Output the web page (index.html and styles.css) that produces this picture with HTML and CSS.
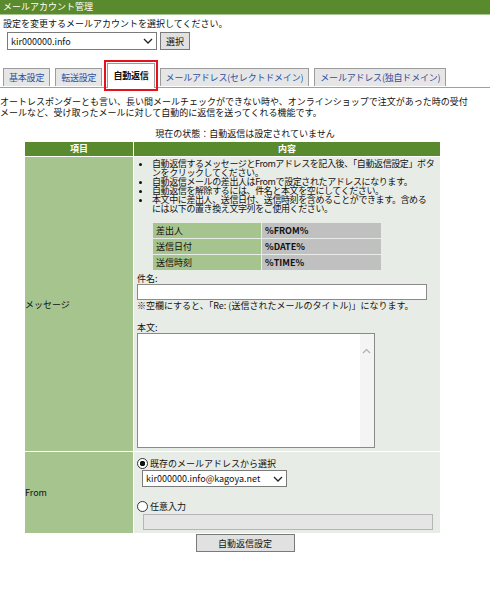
FILE: index.html
```html
<!DOCTYPE html>
<html>
<head>
    <meta charset="utf-8">
    <title>メールアカウント管理</title>
    <link rel="stylesheet" href="styles.css">
</head>
<body>

<div class="title-bar">メールアカウント管理</div>

<p class="lead">設定を変更するメールアカウントを選択してください。</p>
<div class="account-row">
    <span class="select-wrap account-select">
        <select>
            <option>kir000000.info</option>
        </select>
        <svg class="chevron" width="10" height="6" viewBox="0 0 10 6"><path d="M1 1 L5 5 L9 1" fill="none" stroke="#222" stroke-width="1.3"/></svg>
    </span>
    <button class="win-btn">選択</button>
</div>

<ul class="tabs">
    <li class="tab">基本設定</li>
    <li class="tab">転送設定</li>
    <li class="tab tab-active">自動返信</li>
    <li class="tab">メールアドレス(セレクトドメイン)</li>
    <li class="tab">メールアドレス(独自ドメイン)</li>
</ul>

<p class="desc">オートレスポンダーとも言い、長い間メールチェックができない時や、オンラインショップで注文があった時の受付<br>メールなど、受け取ったメールに対して自動的に返信を送ってくれる機能です。</p>

<p class="status">現在の状態：自動返信は設定されていません</p>

<table class="setting-tab">
    <thead>
    <tr>
        <td class="col-item">項目</td><td class="col-body">内容</td>
    </tr>
    </thead>
    <tbody>
    <tr>
        <td class="item-cell">メッセージ</td>
        <td class="body-cell">
            <ul class="notes">
                <li>自動返信するメッセージとFromアドレスを記入後、「自動返信設定」ボタンをクリックしてください。</li>
                <li>自動返信メールの差出人はFromで設定されたアドレスになります。</li>
                <li>自動返信を解除するには、件名と本文を空にしてください。</li>
                <li>本文中に差出人、送信日付、送信時刻を含めることができます。含める<br>には以下の置き換え文字列をご使用ください。</li>
            </ul>
            <table class="replace-tab">
                <tr><td class="replace-name">差出人</td><td class="replace-code">%FROM%</td></tr>
                <tr><td class="replace-name">送信日付</td><td class="replace-code">%DATE%</td></tr>
                <tr><td class="replace-name">送信時刻</td><td class="replace-code">%TIME%</td></tr>
            </table>
            <div class="field-label">件名:</div>
            <input class="subject" type="text">
            <div class="field-note">※空欄にすると、「Re: (送信されたメールのタイトル)」になります。</div>
            <div class="field-label body-label">本文:</div>
            <span class="message-wrap">
                <textarea class="message"></textarea>
                <svg class="scroll-up" width="9" height="6" viewBox="0 0 9 6"><path d="M1 5 L4.5 1.5 L8 5" fill="none" stroke="#b0b0b0" stroke-width="1.2"/></svg>
            </span>
        </td>
    </tr>
    <tr>
        <td class="item-cell">From</td>
        <td class="body-cell from-cell">
            <label class="radio-line"><input type="radio" name="from" checked>既存のメールアドレスから選択</label>
            <span class="select-wrap from-select">
                <select>
                    <option>kir000000.info@kagoya.net</option>
                </select>
                <svg class="chevron" width="10" height="6" viewBox="0 0 10 6"><path d="M1 1 L5 5 L9 1" fill="none" stroke="#222" stroke-width="1.3"/></svg>
            </span>
            <label class="radio-line radio-free"><input type="radio" name="from">任意入力</label>
            <input class="free-addr" type="text" disabled>
        </td>
    </tr>
    </tbody>
</table>

<div class="submit-row">
    <button class="win-btn submit-btn">自動返信設定</button>
</div>

</body>
</html>
```

FILE: styles.css
```css
body {
    margin: 0;
    font-family: "Noto Sans CJK JP", "DejaVu Sans", sans-serif;
    font-size: 9px;
    color: #111;
    background: #fff;
}

.title-bar {
    height: 14px;
    line-height: 14px;
    padding-left: 3px;
    background: #5a8a2e;
    color: #fff;
    border-bottom: 1px solid #a9c497;
}

.lead {
    margin: 3px 0 0 3px;
    line-height: 11px;
}

.account-row {
    display: flex;
    gap: 3px;
    margin: 3px 0 0 7px;
}

.select-wrap {
    position: relative;
    display: inline-block;
}
.select-wrap select {
    appearance: none;
    -webkit-appearance: none;
    font-family: inherit;
    font-size: 9px;
    border: 1px solid #7a7a7a;
    background: #fff;
    padding: 0 0 0 3px;
    border-radius: 0;
    color: #111;
}
.chevron {
    position: absolute;
    right: 4px;
    top: 6px;
    pointer-events: none;
}

.account-select select {
    width: 150px;
    height: 18px;
}

.win-btn {
    font-family: inherit;
    font-size: 9px;
    height: 18px;
    padding: 0 5px;
    background: #e1e1e1;
    border: 1px solid #7a7a7a;
    border-radius: 0;
    color: #111;
}

.tabs {
    display: flex;
    align-items: flex-end;
    gap: 5px;
    list-style: none;
    margin: 13px 0 0;
    padding: 0 0 0 3px;
    border-bottom: 1px solid #a0a0a0;
    height: 24px;
}
.tab {
    height: 17px;
    line-height: 17px;
    padding: 0 5px;
    margin-bottom: 1px;
    background: #e6e6e6;
    border: 1px solid #9c9c9c;
    border-bottom: none;
    color: #2e4f9e;
    letter-spacing: -0.2px;
}
.tab-active {
    height: 24px;
    line-height: 24px;
    margin-bottom: -1px;
    background: #fff;
    color: #111;
    font-weight: bold;
    outline: 2px solid #e3121b;
    outline-offset: 1px;
}

.desc {
    margin: 8px 0 0;
    line-height: 11px;
}

.status {
    margin: 10px 0 0;
    line-height: 11px;
    text-align: center;
}

.setting-tab {
    margin: 2px 0 0 24px;
    width: 417px;
    border-spacing: 1px;
}
.setting-tab td {
    padding: 0;
}
.col-item, .col-body {
    height: 14px;
    line-height: 14px;
    background: #5a8a2e;
    color: #fff;
    font-weight: bold;
    text-align: center;
}
.col-item {
    width: 108px;
}

.item-cell {
    background: #a6c48e;
    vertical-align: middle;
}
.setting-tab .body-cell {
    background: #e8ece6;
    padding: 2px 3px 3px;
    vertical-align: top;
}

.notes {
    margin: 0;
    padding-left: 15px;
    line-height: 9px;
    letter-spacing: -0.4px;
}

.replace-tab {
    margin: 9px 0 0 15px;
    border-spacing: 1px;
    width: 230px;
}
.replace-tab td {
    height: 15px;
    padding: 0 0 0 3px;
}
.replace-name {
    width: 105px;
    background: #a6c48e;
}
.replace-code {
    background: #c0c0c0;
    font-weight: bold;
}

.field-label {
    margin-top: 2px;
    line-height: 11px;
}
.body-label {
    margin-top: 11px;
}
.field-note {
    line-height: 11px;
}

.subject {
    display: block;
    box-sizing: border-box;
    width: 290px;
    height: 16px;
    margin: 0;
    border: 1px solid #8a8a8a;
    font-size: 9px;
}
.message-wrap {
    position: relative;
    display: block;
    width: 238px;
}
.message {
    display: block;
    box-sizing: border-box;
    width: 238px;
    height: 115px;
    margin: 0;
    border: 1px solid #8a8a8a;
    resize: none;
    background: linear-gradient(to left, #f4f4f4 14px, #fff 14px);
}
.scroll-up {
    position: absolute;
    top: 15px;
    right: 4px;
}

.setting-tab .from-cell {
    padding: 5px 3px 3px;
}
.radio-line {
    display: flex;
    align-items: center;
    height: 12px;
}
.radio-line input {
    appearance: none;
    -webkit-appearance: none;
    box-sizing: border-box;
    width: 11px;
    height: 11px;
    margin: 0 2px 0 0;
    border: 1px solid #333;
    border-radius: 50%;
    background: #fff;
}
.radio-line input:checked {
    background: radial-gradient(circle, #111 0 2.5px, #fff 3px);
}
.from-select {
    margin: 1px 0 0 5px;
}
.from-select select {
    width: 145px;
    height: 17px;
}
.radio-free {
    margin-top: 13px;
}
.free-addr {
    display: block;
    box-sizing: border-box;
    width: 290px;
    height: 16px;
    margin: 2px 0 0 6px;
    border: 1px solid #b5b5b5;
    background: #e5e5e5;
}

.submit-row {
    text-align: center;
}
.submit-btn {
    width: 99px;
}
```
